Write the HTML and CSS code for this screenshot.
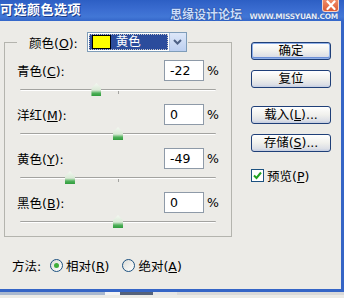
FILE: index.html
```html
<!DOCTYPE html>
<html lang="zh-CN">
<head>
    <meta charset="UTF-8">
    <title>可选颜色选项</title>
    <link rel="stylesheet" href="styles.css">
</head>
<body>
    <div class="window">
        <!-- Title bar -->
        <div class="titlebar">
            <span class="title">可选颜色选项</span>
            <span class="close">
                <svg width="14" height="11" viewBox="0 0 14 11"><path d="M3.5 1.5 L10.5 9 M10.5 1.5 L3.5 9" stroke="#fff" stroke-width="2.2" stroke-linecap="round"/></svg>
            </span>
            <span class="watermark"><span class="wm-cn">思缘设计论坛</span><span class="wm-en"><span>WWW.MISSYUAN.</span><span>COM</span></span></span>
        </div>

        <div class="dialog">
            <div class="main">
                <fieldset class="group">
                    <legend class="group-head">
                        <span class="group-label">颜色(<u>O</u>):</span>
                        <span class="combo">
                            <span class="combo-value"><span class="swatch"></span>黄色</span>
                            <span class="combo-arrow">
                                <svg width="9" height="6" viewBox="0 0 9 6"><path d="M1 1 L4.5 4.5 L8 1" fill="none" stroke="#4d6185" stroke-width="2"/></svg>
                            </span>
                        </span>
                    </legend>

                    <div class="row">
                        <span class="row-label">青色(<u>C</u>):</span>
                        <span class="field">-22</span>
                        <span class="pct">%</span>
                    </div>
                    <div class="slider"><div class="track"><span class="tick"></span><span class="thumb" style="left:39%"></span></div></div>

                    <div class="row">
                        <span class="row-label">洋红(<u>M</u>):</span>
                        <span class="field">0</span>
                        <span class="pct">%</span>
                    </div>
                    <div class="slider"><div class="track"><span class="tick"></span><span class="thumb" style="left:50%"></span></div></div>

                    <div class="row">
                        <span class="row-label">黄色(<u>Y</u>):</span>
                        <span class="field">-49</span>
                        <span class="pct">%</span>
                    </div>
                    <div class="slider"><div class="track"><span class="tick"></span><span class="thumb" style="left:25.5%"></span></div></div>

                    <div class="row">
                        <span class="row-label">黑色(<u>B</u>):</span>
                        <span class="field">0</span>
                        <span class="pct">%</span>
                    </div>
                    <div class="slider"><div class="track"><span class="tick"></span><span class="thumb" style="left:50%"></span></div></div>
                </fieldset>

                <div class="method">
                    <span class="method-label">方法:</span>
                    <span class="radio checked"></span>
                    <span class="radio-text">相对(<u>R</u>)</span>
                    <span class="radio"></span>
                    <span class="radio-text">绝对(<u>A</u>)</span>
                </div>
            </div>

            <div class="side">
                <button class="btn btn-default">确定</button>
                <button class="btn">复位</button>
                <button class="btn btn-gap">载入(<u>L</u>)...</button>
                <button class="btn">存储(<u>S</u>)...</button>
                <div class="check-row">
                    <span class="checkbox">
                        <svg width="9" height="9" viewBox="0 0 9 9"><path d="M1 4.5 L3.5 7 L8 1.5" fill="none" stroke="#21a121" stroke-width="2"/></svg>
                    </span>
                    <span>预览(<u>P</u>)</span>
                </div>
            </div>
        </div>

        <div class="taskbar">
            <span class="tb-a"></span><span class="tb-b"></span><span class="tb-c"></span><span class="tb-d"></span><span class="tb-e"></span>
        </div>
    </div>
</body>
</html>
```

FILE: styles.css
```css
body {
    margin: 0;
    font-family: "DejaVu Sans", "Noto Sans CJK SC", sans-serif;
    font-size: 12.5px;
    color: #000;
    background: #ecebe7;
}
.window {
    width: 344px;
    height: 298px;
    overflow: hidden;
}
.titlebar {
    position: relative;
    height: 21px;
    display: flex;
    align-items: flex-start;
    background: linear-gradient(#2d5fc4, #3a6cd0 45%, #4277d6 80%, #3466c9);
}
.title {
    color: #fff;
    font-family: "Noto Sans CJK SC", sans-serif;
    font-weight: bold;
    font-size: 13px;
    line-height: 18px;
    letter-spacing: 0.5px;
    text-shadow: 1px 1px 0 #1a3c8a;
}
.watermark {
    position: absolute;
    z-index: 1;
    left: 170px;
    width: 168px;
    top: 6px;
    display: flex;
    align-items: flex-end;
    justify-content: space-between;
    white-space: nowrap;
}
.wm-cn {
    font-family: "Noto Sans CJK SC", sans-serif;
    font-weight: bold;
    font-size: 12px;
    line-height: 15px;
    color: #c9dcfb;
    text-shadow: 0 0 1px #1c3f86, 0 0 1px #1c3f86;
}
.wm-en {
    font-family: "DejaVu Sans", sans-serif;
    font-weight: bold;
    font-size: 7.5px;
    line-height: 8px;
    letter-spacing: -0.3px;
    color: #e2ecfc;
    text-shadow: 0 0 1px #1c3f86;
}
.close {
    position: absolute;
    left: 322px;
    top: 0;
    width: 15px;
    height: 11px;
    background: linear-gradient(#f08c68, #dc5a34);
    border: 1px solid #f7d4c4;
    border-top: none;
    border-radius: 0 0 3px 3px;
    display: flex;
    align-items: center;
    justify-content: center;
}

/* dialog body */
.dialog {
    display: flex;
    height: 271px;
    border-right: 3px solid #3565c6;
    border-bottom: 3px solid #3565c6;
    box-sizing: border-box;
}
.main {
    width: 232px;
    padding-left: 4px;
    box-sizing: border-box;
}
.group {
    margin: 11px 0 0;
    padding: 8px 12px 0;
    width: 228px;
    box-sizing: border-box;
    border: 1px solid #b4b4ae;
}
.group-head {
    display: flex;
    align-items: center;
    margin-left: 0;
    padding: 0 1px 0 12px;
}
.group-label {
    margin-right: 9px;
}
.combo {
    display: flex;
    width: 100px;
    height: 20px;
    box-sizing: border-box;
    border: 1px solid #7f9db9;
    background: #fff;
}
.combo-value {
    flex: 1;
    display: flex;
    align-items: center;
    gap: 5px;
    margin: 1px;
    padding-left: 3px;
    background: #2b4c9c;
    outline: 1px dotted #c8c8c8;
    outline-offset: -1px;
    color: #fff;
    line-height: 16px;
}
.swatch {
    width: 17px;
    height: 12px;
    background: #ffff00;
    border: 1px solid #000;
}
.combo-arrow {
    width: 16px;
    display: flex;
    align-items: center;
    justify-content: center;
    background: linear-gradient(#dde7f8, #bccff0);
    border-left: 1px solid #a9bde0;
}

.row {
    display: flex;
    align-items: center;
    height: 21px;
}
.row-label {
    flex: 1;
}
.field {
    width: 40px;
    height: 21px;
    box-sizing: border-box;
    border: 1px solid #8e9aa8;
    background: #fff;
    padding-left: 5px;
    line-height: 19px;
}
.pct {
    width: 15px;
    text-align: right;
}
.slider {
    height: 23px;
    padding: 8px 3px 0;
    box-sizing: border-box;
}
.track {
    position: relative;
    height: 1px;
    background: #a3a3a0;
    border-bottom: 1px solid #fff;
    border-radius: 1px;
}
.tick {
    position: absolute;
    left: 50%;
    top: 2px;
    width: 1px;
    height: 3px;
    background: #a3a3a0;
}
.thumb {
    position: absolute;
    top: -6px;
    width: 10px;
    height: 13px;
    margin-left: -5px;
    background: linear-gradient(#f4f8f2, #d9e9d6 55%, #4fb05a 78%, #2f9c3c);
    clip-path: polygon(50% 0, 100% 40%, 100% 100%, 0 100%, 0 40%);
}

.method {
    display: flex;
    align-items: center;
    margin: 20px 0 0 8px;
    height: 16px;
}
.method-label {
    width: 38px;
}
.radio {
    width: 11px;
    height: 11px;
    border: 1px solid #1c5180;
    border-radius: 50%;
    background: linear-gradient(135deg, #dcdcd6, #fff);
    display: flex;
    align-items: center;
    justify-content: center;
    margin-right: 3px;
}
.radio.checked::after {
    content: "";
    width: 5px;
    height: 5px;
    border-radius: 50%;
    background: #3fae3a;
}
.radio-text {
    margin-right: 13px;
}

/* right column */
.side {
    display: flex;
    flex-direction: column;
    align-items: flex-start;
    padding: 21px 0 0 19px;
}
.btn {
    width: 80px;
    height: 18px;
    margin-bottom: 10px;
    padding: 0;
    font: inherit;
    line-height: 16px;
    border: 1px solid #1f3f78;
    border-radius: 3px;
    background: linear-gradient(#ffffff, #f0f0ec 50%, #dcdfe6 85%, #c3cce0);
}
.btn-default {
    box-shadow: inset 0 0 0 1px #8fb0e8, inset 0 -1px 0 1px #6c8fd6;
}
.btn-gap {
    margin-top: 8px;
}
.check-row {
    display: flex;
    align-items: center;
    gap: 3px;
    margin-top: 4px;
}
.checkbox {
    width: 11px;
    height: 11px;
    border: 1px solid #1c5180;
    background: #fff;
    display: flex;
    align-items: center;
    justify-content: center;
}

/* strip of the taskbar below the window */
.taskbar {
    display: flex;
    height: 3px;
}
.tb-a { width: 105px; background: #a9b8cf; }
.tb-b { width: 15px; background: #f4f4f4; }
.tb-c { width: 33px; background: #55627a; }
.tb-d { width: 24px; background: #e6e6e6; }
.tb-e { flex: 1; background: #d9d9d9; }
```
